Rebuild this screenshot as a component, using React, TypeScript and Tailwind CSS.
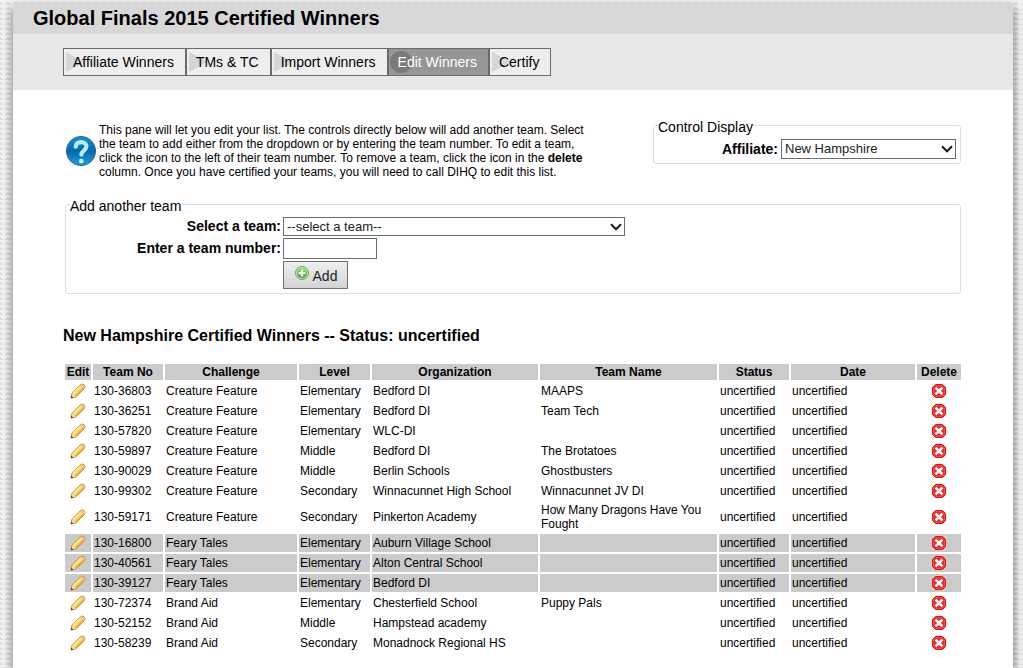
import React, { useState } from "react";

type Team = {
  no: string;
  challenge: string;
  level: string;
  org: string;
  name: string;
};

const teams: Team[] = [
  { no: "130-36803", challenge: "Creature Feature", level: "Elementary", org: "Bedford DI", name: "MAAPS" },
  { no: "130-36251", challenge: "Creature Feature", level: "Elementary", org: "Bedford DI", name: "Team Tech" },
  { no: "130-57820", challenge: "Creature Feature", level: "Elementary", org: "WLC-DI", name: "" },
  { no: "130-59897", challenge: "Creature Feature", level: "Middle", org: "Bedford DI", name: "The Brotatoes" },
  { no: "130-90029", challenge: "Creature Feature", level: "Middle", org: "Berlin Schools", name: "Ghostbusters" },
  { no: "130-99302", challenge: "Creature Feature", level: "Secondary", org: "Winnacunnet High School", name: "Winnacunnet JV DI" },
  { no: "130-59171", challenge: "Creature Feature", level: "Secondary", org: "Pinkerton Academy", name: "How Many Dragons Have You Fought" },
  { no: "130-16800", challenge: "Feary Tales", level: "Elementary", org: "Auburn Village School", name: "" },
  { no: "130-40561", challenge: "Feary Tales", level: "Elementary", org: "Alton Central School", name: "" },
  { no: "130-39127", challenge: "Feary Tales", level: "Elementary", org: "Bedford DI", name: "" },
  { no: "130-72374", challenge: "Brand Aid", level: "Elementary", org: "Chesterfield School", name: "Puppy Pals" },
  { no: "130-52152", challenge: "Brand Aid", level: "Middle", org: "Hampstead academy", name: "" },
  { no: "130-58239", challenge: "Brand Aid", level: "Secondary", org: "Monadnock Regional HS", name: "" },
];

const tabs = ["Affiliate Winners", "TMs & TC", "Import Winners", "Edit Winners", "Certify"];

const columns = [
  { label: "Edit", width: "w-[26px]" },
  { label: "Team No", width: "w-[70px]" },
  { label: "Challenge", width: "w-[132px]" },
  { label: "Level", width: "w-[71px]" },
  { label: "Organization", width: "w-[166px]" },
  { label: "Team Name", width: "w-[177px]" },
  { label: "Status", width: "w-[70px]" },
  { label: "Date", width: "w-[124px]" },
  { label: "Delete", width: "w-[44px]" },
];

function HelpIcon() {
  return (
    <svg className="size-8 shrink-0" viewBox="0 0 32 32" aria-hidden="true">
      <defs>
        <linearGradient id="help-fill" x1="0" y1="0" x2="0" y2="1">
          <stop offset="0" stopColor="#1590cc" />
          <stop offset="0.5" stopColor="#0668aa" />
          <stop offset="1" stopColor="#1ba4e0" />
        </linearGradient>
      </defs>
      <circle cx="16" cy="16" r="14.6" fill="url(#help-fill)" stroke="#2a6690" strokeWidth="1" />
      <path
        d="M10.8 11.6c.3-3 2.3-4.4 5.2-4.4 3.3 0 5.4 1.7 5.4 4.4 0 4-5 4-5 8"
        fill="none"
        stroke="#bdeafa"
        strokeWidth="4.2"
        strokeLinecap="round"
        strokeLinejoin="round"
      />
      <circle cx="16.2" cy="26" r="2.3" fill="#d8f4fc" />
    </svg>
  );
}

function PencilIcon() {
  return (
    <svg className="size-4" viewBox="0 0 16 16" aria-hidden="true">
      <path
        d="M1 15 1.8 10.6 10.2 2Q12 .2 14 1.6 16 3.6 14.2 5.8L5.6 14Z"
        fill="#f9dc5c"
        stroke="#b57a3c"
        strokeWidth=".9"
        strokeLinejoin="round"
      />
      <path d="M3.2 10.8 10.8 3.2" stroke="#fbe9a0" strokeWidth="1.5" />
      <path d="m5.4 13 7.8-7.6" stroke="#e5a93a" strokeWidth="1.3" />
      <path d="m10.4 2.6 3.2 3.2 1-1.2q.7-1.4-.6-2.5t-2.6-.5Z" fill="#f6bf98" />
      <path d="m1.4 14.6.8-3.8 3 3Z" fill="#f6dcb6" />
      <path d="m.8 15.2.5-2.5 2 1.9Z" fill="#4d3a2d" />
    </svg>
  );
}

function DeleteIcon() {
  return (
    <svg className="size-4" viewBox="0 0 16 16" aria-hidden="true">
      <path d="M4.5 1.5h7l3 3v7l-3 3h-7l-3-3v-7Z" fill="#f02a28" stroke="#e01216" strokeLinejoin="round" />
      <path d="M4.9 2.5h6.2l2.4 2.4v6.2l-2.4 2.4H4.9l-2.4-2.4V4.9Z" fill="none" stroke="#f8605c" strokeWidth=".6" />
      <path d="m4.6 4.6 6.8 6.8m0-6.8-6.8 6.8" stroke="#fff" strokeWidth="2.6" />
    </svg>
  );
}

function AddIcon() {
  return (
    <svg className="size-4" viewBox="0 0 16 16" aria-hidden="true">
      <defs>
        <linearGradient id="add-fill" x1="0" y1="0" x2="0" y2="1">
          <stop offset="0" stopColor="#9bd783" />
          <stop offset="1" stopColor="#48a43a" />
        </linearGradient>
      </defs>
      <circle cx="8" cy="8" r="6.5" fill="#c8e8bd" stroke="#62a954" />
      <circle cx="8" cy="8" r="5.2" fill="url(#add-fill)" />
      <path d="M8 4.6v6.8M4.6 8h6.8" stroke="#fff" strokeWidth="2.2" />
    </svg>
  );
}

function Dropdown({ id, options, className }: { id: string; options: string[]; className: string }) {
  return (
    <div className={`relative ${className}`}>
      <select
        id={id}
        className="block size-full appearance-none border border-[#6d6d6d] bg-white pr-5 pl-[3px] text-[13px] leading-4 text-[#222]"
      >
        {options.map((o) => (
          <option key={o}>{o}</option>
        ))}
      </select>
      <svg
        className="pointer-events-none absolute top-1/2 right-[3px] h-2 w-3 -translate-y-1/2"
        viewBox="0 0 12 8"
        aria-hidden="true"
      >
        <path d="m1 1.3 5 5 5-5" fill="none" stroke="#1c1c1c" strokeWidth="2" />
      </svg>
    </div>
  );
}

export default function App() {
  const [active, setActive] = useState("Edit Winners");
  const [number, setNumber] = useState("");

  return (
    <div className="min-h-screen bg-[#f3f3f3] bg-[linear-gradient(45deg,#dedede_25%,transparent_25%),linear-gradient(-45deg,#dedede_25%,transparent_25%)] bg-[size:8px_5px] pt-[3px] pr-[10px] pl-[13px] font-['Liberation_Sans',Arial,sans-serif] text-black">
      <div className="min-h-[calc(100vh-3px)] bg-white shadow-[0_5px_10px_rgba(0,0,0,0.55)]">
        <header>
          <h1 className="bg-[#d8d8d8] pl-5 text-[20px] leading-[31px] font-bold">Global Finals 2015 Certified Winners</h1>
          <nav className="flex bg-[#e7e7e7] py-[14px] pl-[50px]">
            {tabs.map((tab) => {
              const on = tab === active;
              return (
                <button
                  key={tab}
                  type="button"
                  onClick={() => setActive(tab)}
                  className={`relative h-7 border border-[#6a6a6a] pr-[11px] pl-[9px] text-[14px] leading-[26px] ${
                    on ? "bg-[#969696] text-white" : "bg-[#eeeeee]"
                  }`}
                >
                  <svg className="absolute top-[2px] left-[1px] size-[22px]" viewBox="0 0 22 22" aria-hidden="true">
                    {on ? <circle cx="11" cy="11" r="11" fill="#7a7a7a" /> : <path d="M1 1 20 11 1 21Z" fill="#d6d6d6" />}
                  </svg>
                  <span className="relative">{tab}</span>
                </button>
              );
            })}
          </nav>
        </header>

        <main className="px-[50px]">
          <div className="flex items-start justify-between px-[2px] pt-[31px]">
            <div className="flex items-center pt-[2px]">
              <HelpIcon />
              <p className="pl-[2px] text-[12px] leading-[14px] whitespace-nowrap">
                This pane will let you edit your list. The controls directly below will add another team. Select
                <br />
                the team to add either from the dropdown or by entering the team number. To edit a team,
                <br />
                click the icon to the left of their team number. To remove a team, click the icon in the <b>delete</b>
                <br />
                column. Once you have certified your teams, you will need to call DIHQ to edit this list.
              </p>
            </div>
            <fieldset className="w-[308px] rounded-[3px] border border-[#d5dfe5] px-1 pb-1">
              <legend className="h-2 text-[14px] leading-[13px]">Control Display</legend>
              <div className="flex items-center justify-end gap-[3px] pt-[10px]">
                <label htmlFor="affiliate" className="text-[14px] leading-5 font-bold">
                  Affiliate:
                </label>
                <Dropdown id="affiliate" className="h-5 w-[175px]" options={["New Hampshire"]} />
              </div>
            </fieldset>
          </div>

          <fieldset className="mx-[2px] mt-[21px] rounded-[3px] border border-[#d5dfe5] pb-1 pl-1">
            <legend className="h-2 text-[14px] leading-[13px]">Add another team</legend>
            <form
              className="grid grid-cols-[211px_1fr] items-center gap-[2px] pt-[9px]"
              onSubmit={(e) => e.preventDefault()}
            >
              <label htmlFor="team" className="text-right text-[14px] leading-[19px] font-bold">
                Select a team:
              </label>
              <Dropdown id="team" className="h-[19px] w-[342px]" options={["--select a team--"]} />
              <label htmlFor="number" className="text-right text-[14px] leading-[21px] font-bold">
                Enter a team number:
              </label>
              <input
                id="number"
                type="text"
                value={number}
                onChange={(e) => setNumber(e.target.value)}
                className="h-[21px] w-[94px] border border-[#6d6d6d] bg-white px-[2px] text-[13px]"
              />
              <button
                type="submit"
                className="col-start-2 flex h-7 w-[65px] items-center justify-center gap-[3px] border border-[#707070] bg-linear-to-b from-[#efefef] to-[#d3d3d3] text-[14px] text-[#222]"
              >
                <span className="pb-1">
                  <AddIcon />
                </span>
                <span className="pt-[2px]">Add</span>
              </button>
            </form>
          </fieldset>

          <h2 className="pt-[32px] text-[16px] leading-[20px] font-bold">
            New Hampshire Certified Winners -- Status: uncertified
          </h2>

          <table className="mt-4 w-full table-fixed border-separate border-spacing-[2px] text-[12px] leading-[14px]">
            <thead>
              <tr>
                {columns.map((c) => (
                  <th key={c.label} className={`bg-[#cbcbcb] p-0 py-px font-bold ${c.width}`}>
                    {c.label}
                  </th>
                ))}
              </tr>
            </thead>
            <tbody>
              {teams.map((t) => {
                const shade = t.challenge === "Feary Tales" ? "bg-[#cbcbcb]" : "";
                return (
                  <tr key={t.no}>
                    <td className={`p-px ${shade}`}>
                      <button type="button" aria-label={`Edit ${t.no}`} className="mx-auto block">
                        <PencilIcon />
                      </button>
                    </td>
                    <td className={`p-px ${shade}`}>{t.no}</td>
                    <td className={`p-px ${shade}`}>{t.challenge}</td>
                    <td className={`p-px ${shade}`}>{t.level}</td>
                    <td className={`p-px ${shade}`}>{t.org}</td>
                    <td className={`p-px ${shade}`}>{t.name}</td>
                    <td className={`p-px ${shade}`}>uncertified</td>
                    <td className={`p-px ${shade}`}>uncertified</td>
                    <td className={`p-px ${shade}`}>
                      <button type="button" aria-label={`Delete ${t.no}`} className="mx-auto block">
                        <DeleteIcon />
                      </button>
                    </td>
                  </tr>
                );
              })}
            </tbody>
          </table>
        </main>
      </div>
    </div>
  );
}
